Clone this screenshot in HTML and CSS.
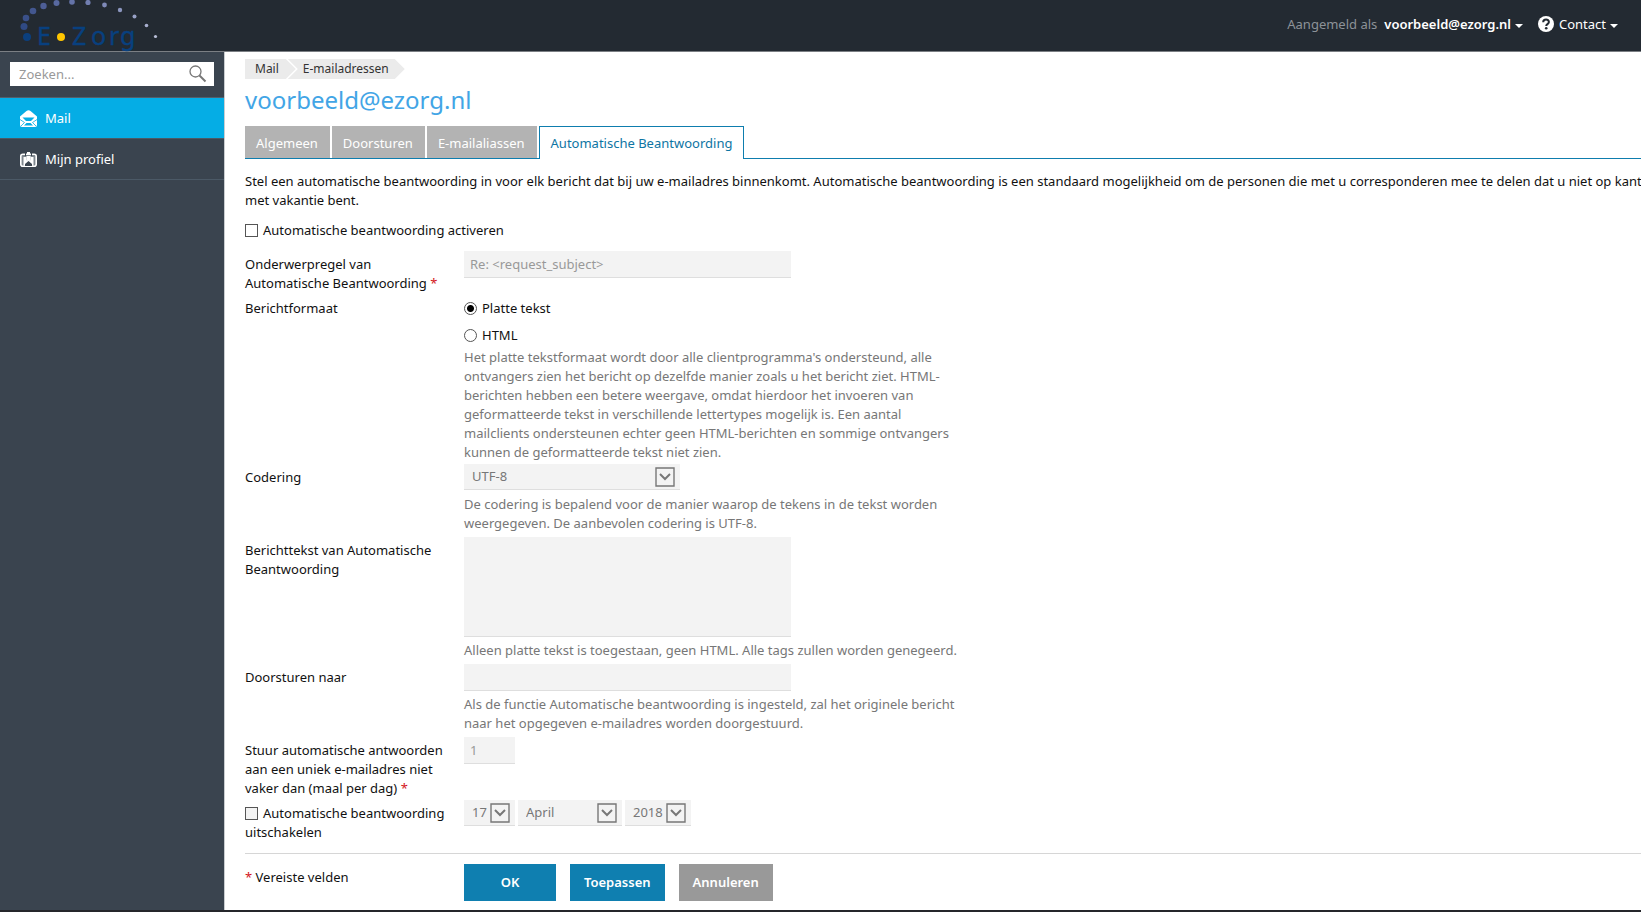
FILE: index.html
```html
<!DOCTYPE html>
<html lang="nl">
<head>
<meta charset="utf-8">
<title>Automatische Beantwoording - E-Zorg</title>
<link rel="stylesheet" href="styles.css">
</head>
<body>
<header class="topbar">
  <a class="logo" href="#" aria-label="E-Zorg">
    <svg width="170" height="50" viewBox="0 0 170 50" aria-hidden="true">
      <g fill="#0b3f7d"><circle cx="27" cy="37" r="4"/></g>
      <circle cx="24" cy="26.500" r="3.500" fill="#304a84"/>
      <circle cx="26" cy="18" r="3.300" fill="#3a5089"/>
      <circle cx="33" cy="11" r="3.300" fill="#43578f"/>
      <circle cx="43.500" cy="6" r="3.200" fill="#4d5e97"/>
      <circle cx="56.500" cy="3" r="3" fill="#5869a0"/>
      <circle cx="72" cy="2" r="2.800" fill="#6473a8"/>
      <circle cx="88" cy="2.500" r="2.600" fill="#717eb0"/>
      <circle cx="104.500" cy="5" r="2.400" fill="#7f8ab8"/>
      <circle cx="120" cy="10" r="2.200" fill="#8c96bf"/>
      <circle cx="134.500" cy="16.500" r="2" fill="#98a1c6"/>
      <circle cx="146.500" cy="25.500" r="1.800" fill="#a8afcf"/>
      <circle cx="155.500" cy="36.500" r="1.600" fill="#b9bfd8"/>
      <circle cx="61" cy="37" r="4" fill="#ffc600"/>
      <text class="logo-text" y="45"><tspan x="37">E</tspan><tspan x="72">Z</tspan><tspan x="91">o</tspan><tspan x="109">r</tspan><tspan x="120">g</tspan></text>
    </svg>
  </a>
  <nav class="account">
    <span class="muted">Aangemeld als</span>
    <button class="top-btn strong" type="button">voorbeeld@ezorg.nl <span class="caret"></span></button>
    <button class="top-btn" type="button">
      <svg class="help" width="16" height="16" viewBox="0 0 16 16" aria-hidden="true"><circle cx="8" cy="8" r="8" fill="#fff"/><path d="M5.200 6.200C5.200 2.600 10.900 2.700 10.900 6c0 2.100-2.700 2.100-2.700 4" fill="none" stroke="#232a32" stroke-width="2"/><circle cx="8.200" cy="12.300" r="1.300" fill="#232a32"/></svg>
      Contact <span class="caret"></span></button>
  </nav>
</header>
<div class="layout">
  <aside class="sidebar">
    <form class="search">
      <input type="search" aria-label="Zoeken" placeholder="Zoeken...">
      <button type="button" aria-label="Zoek">
        <svg width="18" height="18" viewBox="0 0 18 18" fill="none" stroke="#777"><circle cx="6.500" cy="6.500" r="5.500" stroke-width="1.300"/><path d="M10.500 10.500l6 6" stroke-width="2"/></svg>
      </button>
    </form>
    <nav class="menu">
      <a class="active" href="#">
        <svg width="17" height="17" viewBox="0 0 17 17" aria-hidden="true"><path d="M0 6.500L6.500 1q2-1.500 4 0L17 6.500V15q0 2-2 2H2q-2 0-2-2z" fill="#fff"/><path d="M2.500 7.500h12l-3.500 3.500H6z" fill="#05ade5"/><path d="M0 9.500l4.500 3L1 16M17 9.500l-4.500 3L16 16" fill="none" stroke="#05ade5" stroke-width=".8"/><path d="M4 15.500L6.500 13h4l2.500 2.500z" fill="#05ade5"/></svg>
        Mail</a>
      <a href="#">
        <svg width="17" height="17" viewBox="0 0 17 17" aria-hidden="true"><rect x=".8" y="3.300" width="15.400" height="12" rx="2" fill="#7e878e" stroke="#fff" stroke-width="1.600"/><path d="M3.500 14.800V6h3v3l2 1.500 2-1.500V6h3v8.800z" fill="#fff"/><path d="M6.500 5h4v4L8.500 11l-2-2z" fill="#fff"/><path d="M5 15v-2l3.500-3 3.500 3v2z" fill="#3a444f"/><path d="M7 1h3v3H7z" fill="#fff"/><path d="M5.500 2v3M11.500 2v3" stroke="#3a444f"/></svg>
        Mijn profiel</a>
    </nav>
  </aside>
  <main class="content">
    <nav class="crumbs" aria-label="Kruimelpad">
      <a class="first" href="#">Mail</a><a href="#">E-mailadressen</a>
    </nav>
    <h1>voorbeeld@ezorg.nl</h1>
    <nav class="tabs">
      <a href="#">Algemeen</a><a href="#">Doorsturen</a><a href="#">E-mailaliassen</a><a class="current" href="#">Automatische Beantwoording</a>
    </nav>
    <p class="intro">Stel een automatische beantwoording in voor elk bericht dat bij uw e-mailadres binnenkomt. Automatische beantwoording is een standaard mogelijkheid om de personen die met u corresponderen mee te delen dat u niet op kantoor of<br>met vakantie bent.</p>
    <form>
      <div class="activate"><input type="checkbox" id="on"><label for="on">Automatische beantwoording activeren</label></div>
      <div class="rows">
        <div class="row first-row">
          <label class="name" for="subject">Onderwerpregel van Automatische Beantwoording <span class="req">*</span></label>
          <div class="field"><input class="box" id="subject" type="text" value="Re: &lt;request_subject&gt;" disabled></div>
        </div>
        <div class="row plain tight" role="radiogroup" aria-labelledby="fmt">
          <span class="name" id="fmt">Berichtformaat</span>
          <div class="field">
            <div class="radio"><input type="radio" name="format" id="plain" checked><label for="plain">Platte tekst</label></div>
            <div class="radio"><input type="radio" name="format" id="html"><label for="html">HTML</label></div>
            <p class="hint">Het platte tekstformaat wordt door alle clientprogramma's ondersteund, alle ontvangers zien het bericht op dezelfde manier zoals u het bericht ziet. HTML-berichten hebben een betere weergave, omdat hierdoor het invoeren van geformatteerde tekst in verschillende lettertypes mogelijk is. Een aantal mailclients ondersteunen echter geen HTML-berichten en sommige ontvangers kunnen de geformatteerde tekst niet zien.</p>
          </div>
        </div>
        <div class="row">
          <label class="name" for="enc">Codering</label>
          <div class="field">
            <span class="select wide"><select id="enc" disabled><option>UTF-8</option></select><svg width="20" height="20" viewBox="0 0 20 20" aria-hidden="true"><path d="M1 1h18v18H1z"/><path class="chevron" d="M5 7l5 5 5-5"/></svg></span>
            <p class="hint">De codering is bepalend voor de manier waarop de tekens in de tekst worden weergegeven. De aanbevolen codering is UTF-8.</p>
          </div>
        </div>
        <div class="row">
          <label class="name" for="body">Berichttekst van Automatische Beantwoording</label>
          <div class="field"><textarea class="box" id="body" disabled></textarea>
            <p class="hint">Alleen platte tekst is toegestaan, geen HTML. Alle tags zullen worden genegeerd.</p></div>
        </div>
        <div class="row">
          <label class="name" for="fwd">Doorsturen naar</label>
          <div class="field"><input class="box" id="fwd" type="text" disabled>
            <p class="hint">Als de functie Automatische beantwoording is ingesteld, zal het originele bericht naar het opgegeven e-mailadres worden doorgestuurd.</p></div>
        </div>
        <div class="row tight">
          <label class="name" for="max">Stuur automatische antwoorden aan een uniek e-mailadres niet vaker dan (maal per dag) <span class="req">*</span></label>
          <div class="field"><input class="box small" id="max" type="text" value="1" disabled></div>
        </div>
        <div class="row">
          <div class="name"><input class="off" type="checkbox" id="off" disabled><label for="off">Automatische beantwoording uitschakelen</label></div>
          <div class="field dates">
            <span class="select day"><select aria-label="Dag" disabled><option>17</option></select><svg width="20" height="20" viewBox="0 0 20 20" aria-hidden="true"><path d="M1 1h18v18H1z"/><path class="chevron" d="M5 7l5 5 5-5"/></svg></span>
            <span class="select month"><select aria-label="Maand" disabled><option>April</option></select><svg width="20" height="20" viewBox="0 0 20 20" aria-hidden="true"><path d="M1 1h18v18H1z"/><path class="chevron" d="M5 7l5 5 5-5"/></svg></span>
            <span class="select year"><select aria-label="Jaar" disabled><option>2018</option></select><svg width="20" height="20" viewBox="0 0 20 20" aria-hidden="true"><path d="M1 1h18v18H1z"/><path class="chevron" d="M5 7l5 5 5-5"/></svg></span>
          </div>
        </div>
      </div>
      <div class="actions">
        <span class="legend"><span class="req">*</span> Vereiste velden</span>
        <button class="btn" type="button">OK</button>
        <button class="btn" type="button">Toepassen</button>
        <button class="btn cancel" type="button">Annuleren</button>
      </div>
    </form>
  </main>
</div>
</body>
</html>
```

FILE: styles.css
```css
* { box-sizing: border-box; }
body {
  margin: 0;
  min-height: 100vh;
  display: flex;
  flex-direction: column;
  overflow-x: hidden;
  border-bottom: 2px solid #25262b;
  background: #fff;
  color: #111;
  font: 13px/19px "Noto Sans", "Open Sans", sans-serif;
}
input, select, textarea, button { font: inherit; color: inherit; margin: 0; }
a { color: inherit; text-decoration: none; }
p, h1 { margin: 0; }

.topbar {
  display: flex;
  justify-content: space-between;
  height: 52px;
  padding-right: 23px;
  background: #232a32;
  border-bottom: 1px solid #7b7f84;
}
.logo svg { display: block; overflow: visible; }
.logo-text { font-size: 25px; fill: #08407f; stroke: #08407f; stroke-width: 0.4; }
.account { display: flex; align-items: center; padding-bottom: 3px; }
.muted { color: #8d9298; margin-right: 7px; }
.top-btn {
  display: flex;
  align-items: center;
  gap: 4px;
  padding: 0;
  margin-right: 15px;
  border: 0;
  background: none;
  color: #fff;
}
.top-btn:last-child { margin-right: 0; }
.strong { font-weight: 600; }
.help { margin-right: 1px; }
.caret { border: 4px solid transparent; border-top-color: #fff; border-bottom: 0; margin-top: 3px; }

.layout { flex: 1; display: flex; }
.sidebar { flex: none; width: 224px; background: #3a444f; color: #fff; }
.search { display: flex; height: 24px; margin: 10px 10px 11px; background: #fff; }
.search input {
  flex: 1;
  min-width: 0;
  padding: 0 9px;
  border: 0;
  background: none;
  color: #333;
  appearance: none;
}
.search input::placeholder { color: #999; opacity: 1; }
.search button { display: flex; align-items: center; padding: 0 7px; border: 0; background: none; }
.menu { border-top: 1px solid #53606d; }
.menu a {
  display: flex;
  align-items: center;
  gap: 8px;
  height: 41px;
  padding-left: 20px;
  border-bottom: 1px solid #4b5966;
}
.menu .active { background: #05ade5; }

.content { flex: 1; min-width: 0; overflow: hidden; padding: 7px 0 9px 20px; border-left: 1px solid #c9cdd0; }
.crumbs { display: flex; height: 20px; font-size: 12px; line-height: 20px; color: #333; }
.crumbs a {
  padding: 0 16px 0 15px;
  margin-left: -8px;
  background: #ebebeb;
  clip-path: polygon(0 0, calc(100% - 10px) 0, 100% 50%, calc(100% - 10px) 100%, 0 100%, 10px 50%);
}
.crumbs .first {
  margin-left: 0;
  padding: 0 17px 0 10px;
  clip-path: polygon(0 0, calc(100% - 10px) 0, 100% 50%, calc(100% - 10px) 100%, 0 100%);
}
h1 { padding: 5px 0 10px; font-size: 24px; line-height: 32px; font-weight: 400; color: #42a5e6; }
.tabs { display: flex; gap: 2px; height: 33px; border-bottom: 1px solid #0e7dae; }
.tabs a { height: 32px; padding: 0 12px 0 11px; line-height: 34px; background: #b3b3b3; color: #fff; }
.tabs .current {
  height: 33px;
  padding: 0 11px;
  line-height: 32px;
  border: 1px solid #0e7dae;
  border-bottom: 0;
  background: #fff;
  color: #0e75a3;
}
.intro { padding: 13px 0 11px; white-space: nowrap; }
.activate, .radio { display: flex; align-items: center; gap: 5px; }

.rows { display: flex; flex-direction: column; padding-top: 11px; }
.row { display: grid; grid-template-columns: 204px minmax(0, 500px); column-gap: 15px; padding-bottom: 4px; }
.first-row { padding-bottom: 6px; }
.tight { padding-bottom: 2px; }
.name { padding-top: 4px; }
.plain .name { padding-top: 0; }
.req { color: #d3161b; }
.field { min-width: 0; }
.radio { height: 19px; margin-bottom: 8px; }
.radio + .radio { margin-bottom: 3px; }
.hint { max-width: 500px; color: #777; }
.box {
  display: block;
  width: 100%;
  max-width: 327px;
  height: 27px;
  padding: 0 6px;
  border: 0;
  border-bottom: 1px solid #dedede;
  border-radius: 0;
  background: #f3f3f3;
  color: #999;
}
.box + .hint { padding-top: 4px; }
.small { max-width: 51px; }
textarea.box { height: 100px; resize: none; }
.select { display: grid; align-items: center; height: 26px; background: #f3f3f3; border-bottom: 1px solid #dedede; }
.select > * { grid-area: 1 / 1; }
.select select {
  width: 100%;
  height: 25px;
  padding: 0 8px;
  border: 0;
  background: none;
  color: #777;
  opacity: 1;
  appearance: none;
}
.select svg { justify-self: end; margin-right: 5px; fill: none; stroke: #777; stroke-width: 1.4; pointer-events: none; }
.select .chevron { stroke-width: 2; }
.select + .hint { padding-top: 5px; }
.wide { max-width: 216px; }
.dates { display: flex; gap: 3px; }
.day { width: 51px; }
.month { width: 104px; }
.year { width: 66px; }

input[type="checkbox"], input[type="radio"] {
  appearance: none;
  flex: none;
  width: 13px;
  height: 13px;
  border: 1px solid #555;
  background: #fff;
}
input[type="radio"] { border-radius: 50%; }
input[type="radio"]:checked { background: radial-gradient(circle, #000 3px, #fff 4px); }
input.off { margin-right: 5px; vertical-align: -2px; background: #f3f3f3; }

.actions { display: flex; gap: 14px; padding-top: 10px; margin-top: 7px; border-top: 1px solid #d6d6d6; }
.legend { width: 205px; padding-top: 4px; }
.btn {
  min-width: 92px;
  height: 37px;
  padding: 0 14px;
  border: 0;
  background: #0f7fb0;
  color: #fff;
  font-weight: 600;
}
.cancel { background: #999; }
```
